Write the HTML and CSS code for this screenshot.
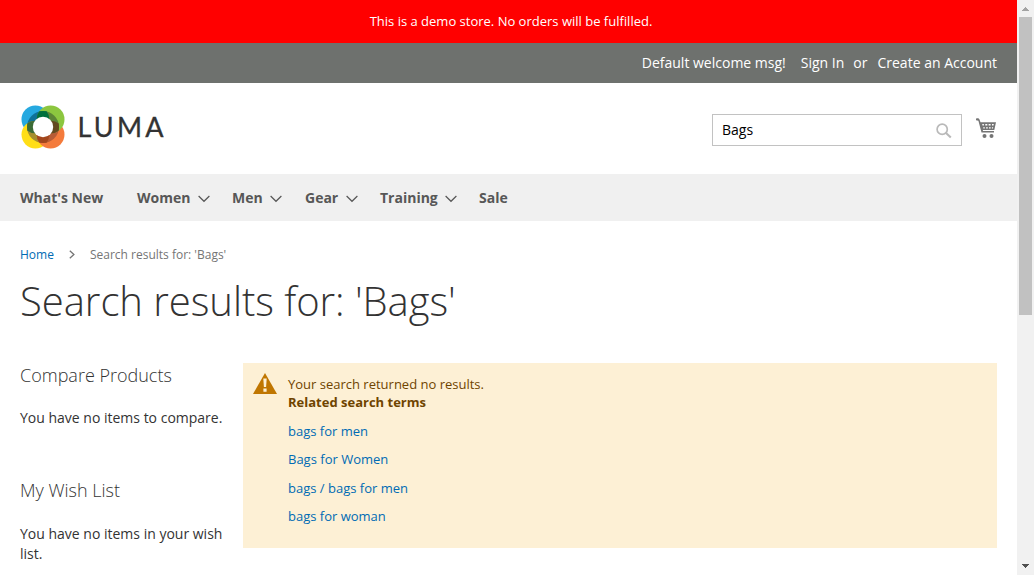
FILE: index.html
```html
<!DOCTYPE html>
<html lang="en">
<head>
<meta charset="utf-8">
<title>Search results for: 'Bags'</title>
<link rel="stylesheet" href="styles.css">
</head>
<body>
<div class="window">
  <div class="page">
    <p class="notice">This is a demo store. No orders will be fulfilled.</p>
    <div class="panel">
      <span class="welcome">Default welcome msg!</span>
      <a class="signin">Sign In</a>
      <span class="or">or</span>
      <a class="create">Create an Account</a>
    </div>
    <header class="header">
      <a class="logo">
        <svg class="mark" width="44" height="44" viewBox="0 0 44 44">
          <defs>
            <clipPath id="ring"><circle cx="22" cy="22" r="16"/></clipPath>
            <clipPath id="tl"><circle cx="14.400" cy="14.400" r="13.900"/></clipPath>
            <clipPath id="br"><circle cx="29.600" cy="29.600" r="13.900"/></clipPath>
          </defs>
          <circle cx="14.400" cy="14.400" r="13.900" fill="#26a9e0"/>
          <circle cx="14.400" cy="29.600" r="13.900" fill="#ffde17"/>
          <circle cx="29.600" cy="29.600" r="13.900" fill="#f47b3c"/>
          <circle cx="29.600" cy="14.400" r="13.900" fill="#8cc63f"/>
          <g clip-path="url(#ring)">
            <circle cx="14.400" cy="14.400" r="13.900" fill="#0f7298"/>
            <circle cx="14.400" cy="29.600" r="13.900" fill="#a58e2e"/>
            <circle cx="29.600" cy="29.600" r="13.900" fill="#b75c36"/>
            <circle cx="29.600" cy="14.400" r="13.900" fill="#5b8436"/>
            <g clip-path="url(#tl)">
              <circle cx="29.600" cy="14.400" r="13.900" fill="#00703c"/>
              <circle cx="14.400" cy="29.600" r="13.900" fill="#3b6b35"/>
            </g>
            <g clip-path="url(#br)">
              <circle cx="29.600" cy="14.400" r="13.900" fill="#63491f"/>
              <circle cx="14.400" cy="29.600" r="13.900" fill="#a3471d"/>
            </g>
          </g>
          <circle cx="22" cy="22" r="10.200" fill="#fff"/>
        </svg>
        <span class="wordmark">LUMA</span>
      </a>
      <div class="tools">
        <div class="search">
          <span>Bags</span>
          <svg width="16" height="16" viewBox="0 0 16 16" fill="none" stroke="#b9b9b9">
            <circle cx="6.200" cy="6.200" r="5.100" stroke-width="1.700"/>
            <path d="M10 10l4.800 4.600" stroke-width="2.100"/>
          </svg>
        </div>
        <svg class="cart" width="20" height="21" viewBox="0 0 20 21">
          <path d="M0 .8C1.200 0 3 .3 3.600 1.700L4.500 4.200H20L18.300 12H6.800L7 13H18V14.600H5.500L2.400 2.800 0 2.300z" fill="#757575"/>
          <path d="M6.200 6h1.700v1.500H6.500zM9.300 6h2v1.500h-2zM12.600 6h2v1.500h-2zM16 6h1.800l-.3 1.500H16zM7.200 9.200h1.600v1.300H7.400zM10.100 9.200h1.700v1.300h-1.700zM13 9.200h1.700v1.300H13zM15.900 9.200h1.300l-.3 1.300h-1z" fill="#fff"/>
          <circle cx="8.500" cy="18" r="2" fill="#757575"/>
          <circle cx="15.500" cy="18" r="2" fill="#757575"/>
        </svg>
      </div>
    </header>
    <nav class="nav">
      <a class="w-new">What's New</a>
      <a class="w-women">Women<svg class="chev" width="12" height="8" viewBox="0 0 12 8"><path d="M.6 1L6 6.300 11.400 1"/></svg></a>
      <a class="w-men">Men<svg class="chev" width="12" height="8" viewBox="0 0 12 8"><path d="M.6 1L6 6.300 11.400 1"/></svg></a>
      <a class="w-gear">Gear<svg class="chev" width="12" height="8" viewBox="0 0 12 8"><path d="M.6 1L6 6.300 11.400 1"/></svg></a>
      <a class="w-training">Training<svg class="chev" width="12" height="8" viewBox="0 0 12 8"><path d="M.6 1L6 6.300 11.400 1"/></svg></a>
      <a>Sale</a>
    </nav>
    <div class="crumbs">
      <a class="link">Home</a>
      <svg width="6" height="9" viewBox="0 0 6 9"><path d="M.8.7L4.900 4.500.8 8.300"/></svg>
      <span>Search results for: 'Bags'</span>
    </div>
    <h1 class="title">Search results for: 'Bags'</h1>
    <div class="columns">
      <aside class="side">
        <section class="block">
          <h2>Compare Products</h2>
          <p>You have no items to compare.</p>
        </section>
        <section class="block">
          <h2>My Wish List</h2>
          <p>You have no items in your wish list.</p>
        </section>
      </aside>
      <main class="message">
        <svg class="warn" width="24" height="21" viewBox="0 0 24 21">
          <path d="M12 0L24 21H0z" fill="#c07600"/>
          <path d="M10.300 5.500h3.400l-.6 8.500h-2.200zM10.400 15.500h3.200v3.200h-3.200z" fill="#fdf0d5"/>
        </svg>
        <div class="results">
          <p>Your search returned no results.</p>
          <strong>Related search terms</strong>
          <a class="link">bags for men</a>
          <a class="link">Bags for Women</a>
          <a class="link">bags / bags for men</a>
          <a class="link">bags for woman</a>
        </div>
      </main>
    </div>
  </div>
  <div class="scrollbar">
    <svg class="up" width="7" height="4" viewBox="0 0 7 4"><path d="M0 4V3H1V2H2V1H3V0H4V1H5V2H6V3H7V4z" fill="#a3a3a3"/></svg>
    <div class="thumb"></div>
    <svg class="down" width="7" height="4" viewBox="0 0 7 4"><path d="M0 0V1H1V2H2V3H3V4H4V3H5V2H6V1H7V0z" fill="#505050"/></svg>
  </div>
</div>
</body>
</html>
```

FILE: styles.css
```css
* { box-sizing: border-box; }
body, p, h1, h2 { margin: 0; }
body {
  font-family: "Open Sans", "Noto Sans", sans-serif;
  font-size: 14px;
  line-height: 20px;
  color: #333;
  background: #fff;
}
svg { display: block; flex: none; }
.window { display: flex; height: 575px; overflow: hidden; }
.page { width: 1017px; flex: none; overflow: hidden; white-space: nowrap; }
.link { color: #006bb4; }

.notice {
  height: 43px;
  padding-left: 5px;
  line-height: 43px;
  font-size: 13px;
  text-align: center;
  color: #fff;
  background: #f00;
}
.panel {
  display: flex;
  justify-content: flex-end;
  height: 40px;
  padding: 10px 20px 0 0;
  color: #fff;
  background: #6e716e;
}
.signin { margin-left: 15px; }
.or { margin-left: 9px; }
.create { margin-left: 10px; }

.header {
  display: flex;
  justify-content: space-between;
  height: 91px;
  padding: 22px 20px 0;
}
.logo { display: flex; padding-left: .5px; }
.wordmark {
  margin-left: 13px;
  font-family: Lato, sans-serif;
  font-size: 27px;
  line-height: 43px;
  letter-spacing: 3.2px;
  -webkit-text-stroke: .3px #333;
}
.tools { display: flex; padding-top: 9px; }
.search {
  display: flex;
  justify-content: space-between;
  width: 250px;
  height: 32px;
  padding: 5px 9px;
  border: 1px solid #c2c2c2;
  color: #000;
}
.search svg { margin-top: 3px; }
.cart { margin: 4px 1px 0 14px; }

.nav {
  display: flex;
  height: 47px;
  padding-left: 20px;
  line-height: 47px;
  font-weight: 700;
  color: #575757;
  background: #f0f0f0;
}
.nav a { display: flex; flex: none; }
.w-new { width: 117px; }
.w-women { width: 95px; }
.w-men { width: 73px; }
.w-gear { width: 75px; }
.w-training { width: 99px; }
.chev { margin: 21px 0 0 7.500px; fill: none; stroke: #575757; stroke-width: 1.2; }

.crumbs {
  display: flex;
  height: 52px;
  padding: 24px 0 0 20px;
  font-size: 12px;
  color: #757575;
}
.crumbs svg { margin: 5px 15px 0; fill: none; stroke: #757575; stroke-width: 1.3; }
.title {
  height: 90px;
  padding: 6px 0 0 20px;
  font-size: 40px;
  font-weight: 300;
  line-height: 44px;
  letter-spacing: -.04px;
}

.columns { display: flex; padding: 0 20px; }
.side { width: 223px; white-space: normal; }
.block { height: 115px; }
.block + .block { height: auto; }
.block h2 {
  margin-bottom: 20px;
  font-size: 18px;
  font-weight: 300;
  line-height: 25px;
}
.block + .block h2 { margin-bottom: 21px; }
.message {
  display: flex;
  width: 754px;
  height: 185px;
  padding: 10px 0 0 10px;
  font-size: 13px;
  line-height: 18px;
  color: #6f4400;
  background: #fdf0d5;
}
.results { display: flex; flex-direction: column; margin-left: 11px; padding-top: 2px; }
.results strong { margin-bottom: 10.600px; line-height: 18px; }
.results .link { margin-bottom: 10.500px; }

.scrollbar {
  display: flex;
  flex-direction: column;
  width: 17px;
  padding: 7px 2px;
  background: #f1f1f1;
}
.up { margin: 0 0 6px 3px; }
.thumb { width: 13px; height: 298px; background: #c1c1c1; }
.down { margin: auto 0 0 3px; }
```
